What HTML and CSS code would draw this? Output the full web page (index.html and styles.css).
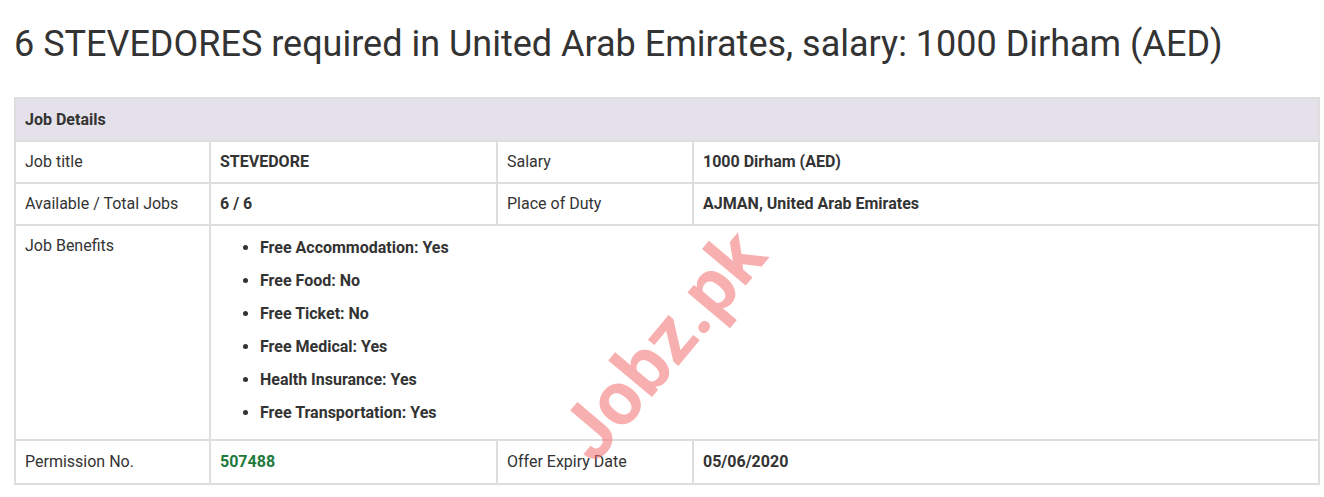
FILE: index.html
```html
<!DOCTYPE html>
<html>
<head>
<meta charset="utf-8">
<link rel="stylesheet" href="styles.css">
</head>
<body>
<div class="page">
  <h1 class="title">6 STEVEDORES required in United Arab Emirates, salary: 1000 Dirham (AED)</h1>
  <div class="table-wrap">
    <table class="details">
      <tr class="head"><th colspan="4">Job Details</th></tr>
      <tr>
        <td class="c1">Job title</td>
        <td class="c2 val">STEVEDORE</td>
        <td class="c3">Salary</td>
        <td class="c4 val">1000 Dirham (AED)</td>
      </tr>
      <tr>
        <td>Available / Total Jobs</td>
        <td class="val">6 / 6</td>
        <td>Place of Duty</td>
        <td class="val">AJMAN, United Arab Emirates</td>
      </tr>
      <tr>
        <td>Job Benefits</td>
        <td colspan="3" class="val">
          <ul class="benefits">
            <li>Free Accommodation: Yes</li>
            <li>Free Food: No</li>
            <li>Free Ticket: No</li>
            <li>Free Medical: Yes</li>
            <li>Health Insurance: Yes</li>
            <li>Free Transportation: Yes</li>
          </ul>
        </td>
      </tr>
      <tr class="last">
        <td>Permission No.</td>
        <td class="val green">507488</td>
        <td>Offer Expiry Date</td>
        <td class="val">05/06/2020</td>
      </tr>
    </table>
    <div class="watermark">Jobz.pk</div>
  </div>
</div>
</body>
</html>
```

FILE: styles.css
```css
html, body {
  margin: 0;
  padding: 0;
  background: #fff;
}
body {
  font-family: Roboto, "Liberation Sans", Arial, sans-serif;
  color: #333;
}
.page {
  padding: 0 4px 0 14px;
}
.title {
  margin: 24px 0 33px 0;
  font-size: 36px;
  line-height: 40px;
  font-weight: 400;
  color: #333;
}
.table-wrap {
  position: relative;
  width: 1306px;
}
.details {
  width: 100%;
  border-collapse: collapse;
  font-size: 16px;
  line-height: 20px;
}
.details th,
.details td {
  border: 2px solid #dedede;
  padding: 10px 9px;
  text-align: left;
  vertical-align: top;
}
.details .head th {
  background: #e5e1ea;
  font-weight: 700;
  padding: 11px 9px 10px;
}
.details .last td {
  padding-top: 11px;
  padding-bottom: 11px;
}
.c1 { width: 175px; }
.c2 { width: 267px; }
.c3 { width: 176px; }
.val { font-weight: 700; }
.green { color: #1e7a3c; }
.benefits {
  margin: 0;
  padding: 0 0 0 40px;
}
.benefits li {
  line-height: 23px;
  margin-bottom: 10px;
}
.benefits li:last-child { margin-bottom: 5px; }
.watermark {
  position: absolute;
  left: 512px;
  top: 203px;
  font-size: 76px;
  font-weight: 700;
  color: rgba(240, 110, 110, 0.55);
  transform: rotate(-50deg);
  transform-origin: center;
  pointer-events: none;
}
```
